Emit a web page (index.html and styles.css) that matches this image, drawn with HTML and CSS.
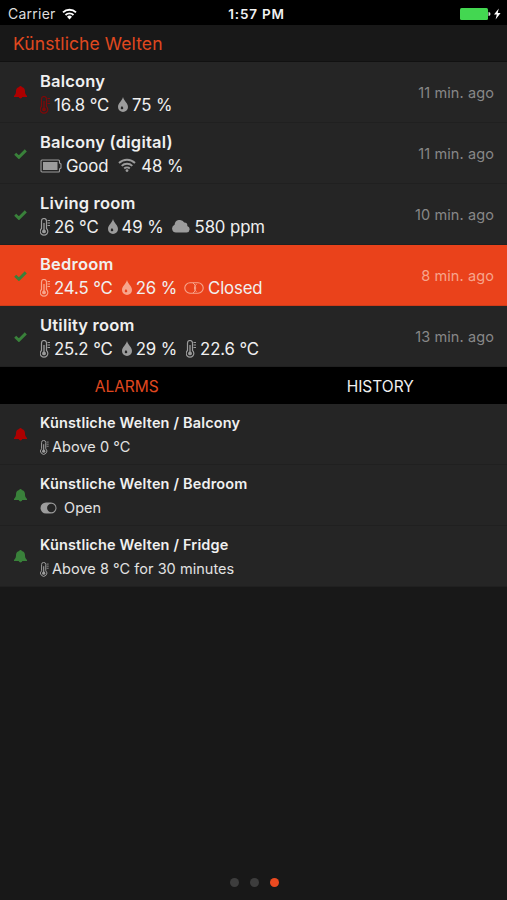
FILE: index.html
```
<!DOCTYPE html>
<html lang="en">
<head>
  <meta charset="UTF-8">
  <meta name="viewport" content="width=device-width, initial-scale=1.0">
  <title>Künstliche Welten</title>
  <link rel="stylesheet" href="styles.css">
</head>
<body>
  <svg class="defs">
    <symbol id="thermo" viewBox="0 0 10 18">
      <path d="M1.5 10.5V3a2.5 2.5 0 0 1 5 0v7.5a3.8 3.8 0 1 1-5 0z" fill="none" stroke="currentColor" stroke-width="1.2"/>
      <path d="M4 5v8" stroke="currentColor" stroke-width="1.3"/>
      <circle cx="4" cy="13.4" r="1.9" fill="currentColor"/>
      <path d="M7.500 2.500H10M7.500 5H10M7.500 7.500H10" stroke="currentColor" stroke-width="1"/>
    </symbol>
    <symbol id="drop" viewBox="0 0 10 15">
      <path fill="currentColor" fill-rule="evenodd" d="M5 0c.7 3.600 5 6.100 5 10a5 5 0 0 1-10 0c0-3.900 4.300-6.400 5-10zM4 9c-1 1-1.500 1.800-1.100 2.700a1.300 1.300 0 0 0 2.400-.5C5.300 10.200 4.300 10 4 9z"/>
    </symbol>
    <symbol id="battery" viewBox="0 0 22 14">
      <path d="M2 1h16.500a1 1 0 0 1 1 1v2l1.500 1v4l-1.500 1v2a1 1 0 0 1-1 1H2a1 1 0 0 1-1-1V2a1 1 0 0 1 1-1z" fill="none" stroke="currentColor" stroke-width="1.100"/>
      <path d="M3 3h14.500v8H3z" fill="currentColor"/>
    </symbol>
    <symbol id="wifi" viewBox="0 0 18 14">
      <path d="M1 5a11.500 11.500 0 0 1 16 0M3.700 7.900a7.600 7.600 0 0 1 10.600 0M6.200 10.500a4 4 0 0 1 5.600 0" fill="none" stroke="currentColor" stroke-width="1.900"/>
      <circle cx="9" cy="12.600" r="1.400" fill="currentColor"/>
    </symbol>
    <symbol id="cloud" viewBox="0 0 18 14">
      <path fill="currentColor" d="M4 13.500a4 4 0 0 1-1.400-7.700A5.200 5.200 0 0 1 12.300 3.600a3 3 0 0 1 3 3.300A3.400 3.400 0 0 1 14.700 13.500z"/>
    </symbol>
    <symbol id="closed" viewBox="0 0 20 12">
      <path d="M6 .8h8a5.200 5.200 0 0 1 0 10.400H6A5.200 5.200 0 0 1 6 .8z" fill="none" stroke="currentColor" stroke-width="1.100"/>
      <path d="M9 1a6 6 0 0 1 0 10M12.500 2.200a4.500 4.500 0 0 0 0 7.600" fill="none" stroke="currentColor"/>
    </symbol>
    <symbol id="open" viewBox="0 0 17 12">
      <path d="M6 .5h5a5.500 5.500 0 0 1 0 11H6A5.500 5.500 0 0 1 6 .5z" fill="currentColor"/>
      <circle cx="11.300" cy="6" r="4.200" fill="#252525"/>
    </symbol>
    <symbol id="bell" viewBox="0 0 14 14">
      <path fill="currentColor" d="M7 0c.8 0 1.300.4 1.400 1 2.100.4 3.300 2 3.400 4.200.1 2.800.4 4 2.200 5.500v1.200H9a2.100 2.100 0 0 1-4 0H0v-1.200c1.800-1.500 2.100-2.700 2.200-5.500C2.300 3 3.500 1.400 5.600 1 5.700.4 6.200 0 7 0z"/>
    </symbol>
    <symbol id="check" viewBox="0 0 13 10">
      <path d="M1.200 4.700 4.900 8.300 11.800 1.400" fill="none" stroke="currentColor" stroke-width="2.900"/>
    </symbol>
  </svg>

  <div class="statusbar">
    <div class="carrier">Carrier
      <svg width="15" height="12" viewBox="0 0 15 12">
        <path d="M1 4.400a9.300 9.300 0 0 1 13 0M3.500 7a5.700 5.700 0 0 1 8 0" fill="none" stroke="#fff" stroke-width="1.900"/>
        <path d="M5 8.800a3.600 3.600 0 0 1 5 0L7.500 11.400z" fill="#fff"/>
      </svg>
    </div>
    <div class="clock">1:57 PM</div>
    <div class="power">
      <svg width="42" height="14" viewBox="0 0 42 14">
        <rect x="0" y="1" width="28" height="12" rx="1.500" fill="#43d751"/>
        <path d="M28.500 5a2 2 0 0 1 0 4z" fill="#ddd"/>
        <path d="M38.800 1.500 34 7.600h2.800l-1.200 4.900L40.600 6h-2.900z" fill="#fff"/>
      </svg>
    </div>
  </div>

  <header>
    <h1>Künstliche Welten</h1>
  </header>

  <ul class="list">
    <li class="row">
      <svg class="state bell red"><use href="#bell"/></svg>
      <div class="info">
        <h2>Balcony</h2>
        <div class="values">
          <span><svg class="thermo dark-red"><use href="#thermo"/></svg>16.8 °C</span>
          <span><svg class="drop"><use href="#drop"/></svg>75 %</span>
        </div>
      </div>
      <time>11 min. ago</time>
    </li>
    <li class="row">
      <svg class="state check green"><use href="#check"/></svg>
      <div class="info">
        <h2>Balcony (digital)</h2>
        <div class="values">
          <span><svg class="battery"><use href="#battery"/></svg>Good</span>
          <span><svg class="wifi"><use href="#wifi"/></svg>48 %</span>
        </div>
      </div>
      <time>11 min. ago</time>
    </li>
    <li class="row">
      <svg class="state check green"><use href="#check"/></svg>
      <div class="info">
        <h2>Living room</h2>
        <div class="values">
          <span><svg class="thermo"><use href="#thermo"/></svg>26 °C</span>
          <span><svg class="drop"><use href="#drop"/></svg>49 %</span>
          <span><svg class="cloud"><use href="#cloud"/></svg>580 ppm</span>
        </div>
      </div>
      <time>10 min. ago</time>
    </li>
    <li class="row selected">
      <svg class="state check green"><use href="#check"/></svg>
      <div class="info">
        <h2>Bedroom</h2>
        <div class="values">
          <span><svg class="thermo"><use href="#thermo"/></svg>24.5 °C</span>
          <span><svg class="drop"><use href="#drop"/></svg>26 %</span>
          <span><svg class="closed"><use href="#closed"/></svg>Closed</span>
        </div>
      </div>
      <time>8 min. ago</time>
    </li>
    <li class="row">
      <svg class="state check green"><use href="#check"/></svg>
      <div class="info">
        <h2>Utility room</h2>
        <div class="values">
          <span><svg class="thermo"><use href="#thermo"/></svg>25.2 °C</span>
          <span><svg class="drop"><use href="#drop"/></svg>29 %</span>
          <span><svg class="thermo"><use href="#thermo"/></svg>22.6 °C</span>
        </div>
      </div>
      <time>13 min. ago</time>
    </li>
  </ul>

  <nav class="tabs">
    <a class="active">ALARMS</a>
    <a>HISTORY</a>
  </nav>

  <ul class="list alarms">
    <li class="row">
      <svg class="state bell red"><use href="#bell"/></svg>
      <div class="info">
        <h2>Künstliche Welten / Balcony</h2>
        <div class="values"><span><svg class="thermo"><use href="#thermo"/></svg>Above 0 °C</span></div>
      </div>
    </li>
    <li class="row">
      <svg class="state bell green"><use href="#bell"/></svg>
      <div class="info">
        <h2>Künstliche Welten / Bedroom</h2>
        <div class="values"><span><svg class="open"><use href="#open"/></svg>Open</span></div>
      </div>
    </li>
    <li class="row">
      <svg class="state bell green"><use href="#bell"/></svg>
      <div class="info">
        <h2>Künstliche Welten / Fridge</h2>
        <div class="values"><span><svg class="thermo"><use href="#thermo"/></svg>Above 8 °C for 30 minutes</span></div>
      </div>
    </li>
  </ul>

  <footer class="pager">
    <i></i><i></i><i class="current"></i>
  </footer>
</body>
</html>
```
FILE: styles.css
```
* {
  box-sizing: border-box;
}
body {
  margin: 0;
  height: 900px;
  display: flex;
  flex-direction: column;
  background: #181818;
  color: #f0f0f0;
  font-family: Inter, "Liberation Sans", sans-serif;
}
h1, h2, ul {
  margin: 0;
  padding: 0;
}
svg {
  flex: none;
}
.defs {
  position: absolute;
  width: 0;
  height: 0;
}

.statusbar {
  height: 25px;
  padding: 2px 5px 0 8px;
  display: grid;
  grid-template-columns: 1fr auto 1fr;
  align-items: center;
  background: #000;
  font-size: 14px;
}
.carrier {
  display: flex;
  align-items: center;
  gap: 6px;
  color: #ddd;
  letter-spacing: 0.25px;
}
.clock {
  font-weight: 600;
  font-size: 13.5px;
  letter-spacing: 0.8px;
  padding-left: 3px;
}
.power {
  display: flex;
  justify-content: flex-end;
}

header {
  height: 37px;
  padding: 0 13px;
  display: flex;
  align-items: center;
  border-bottom: 1px solid #111;
}
h1 {
  color: #e0481f;
  font-size: 17.5px;
  font-weight: 400;
  letter-spacing: 0.1px;
}

.list {
  list-style: none;
}
.row {
  height: 61px;
  padding: 2px 13px 0 0;
  display: flex;
  align-items: center;
  background: #252525;
  border-bottom: 1px solid #202020;
}
.state {
  margin-left: 14px;
  width: 13px;
  height: 10px;
}
.state.bell {
  height: 13px;
  margin-top: -2px;
}
.red {
  color: #ad0000;
}
.green {
  color: #39813a;
}
.info {
  flex: 1;
  margin-left: 13px;
}
h2 {
  font-size: 16.5px;
  font-weight: 600;
  line-height: 24px;
  letter-spacing: 0.2px;
}
.values {
  display: flex;
  gap: 9px;
  font-size: 16.8px;
  line-height: 24px;
  letter-spacing: -0.15px;
  word-spacing: 0.2px;
}
.values span {
  display: flex;
  align-items: center;
  gap: 4px;
}
.values svg {
  color: #9c9c9c;
}
.values svg.dark-red {
  color: #7d0909;
}
.thermo {
  width: 10px;
  height: 18px;
}
.drop {
  width: 10px;
  height: 15px;
  margin-top: -2px;
}
.battery {
  width: 22px;
  height: 14px;
}
.wifi, .cloud {
  width: 18px;
  height: 14px;
  margin-top: -2px;
}
.cloud {
  margin-left: -1px;
  margin-right: 1px;
}
.wifi {
  margin-left: 1px;
  margin-right: 1px;
}
.closed {
  width: 20px;
  height: 12px;
  margin-left: -2px;
}
.open {
  width: 17px;
  height: 12px;
  margin-right: 4px;
}
time {
  margin-top: -2px;
  color: #888;
  font-size: 14.5px;
  letter-spacing: 0.1px;
}

.selected {
  background: #ea421b;
  border-color: #d03b19;
}
.selected .values svg, .selected time {
  color: #f7a58c;
}

.tabs {
  height: 37px;
  padding-top: 1px;
  display: grid;
  grid-template-columns: 1fr 1fr;
  align-items: center;
  text-align: center;
  background: #000;
  font-size: 15.5px;
}
.tabs .active {
  color: #e0481f;
}

.alarms h2 {
  font-size: 14.5px;
  letter-spacing: 0.17px;
}
.alarms .values {
  font-size: 14.5px;
  letter-spacing: 0.04px;
  word-spacing: 0;
  color: #e2e2e2;
}
.alarms .values span {
  gap: 3px;
}
.alarms .thermo {
  width: 9px;
  height: 15px;
}

.pager {
  margin-top: auto;
  height: 36px;
  padding-left: 1px;
  display: flex;
  justify-content: center;
  align-items: center;
  gap: 11px;
}
.pager i {
  width: 9px;
  height: 9px;
  border-radius: 50%;
  background: #3d3d3d;
}
.pager .current {
  background: #ea4a20;
}
```
